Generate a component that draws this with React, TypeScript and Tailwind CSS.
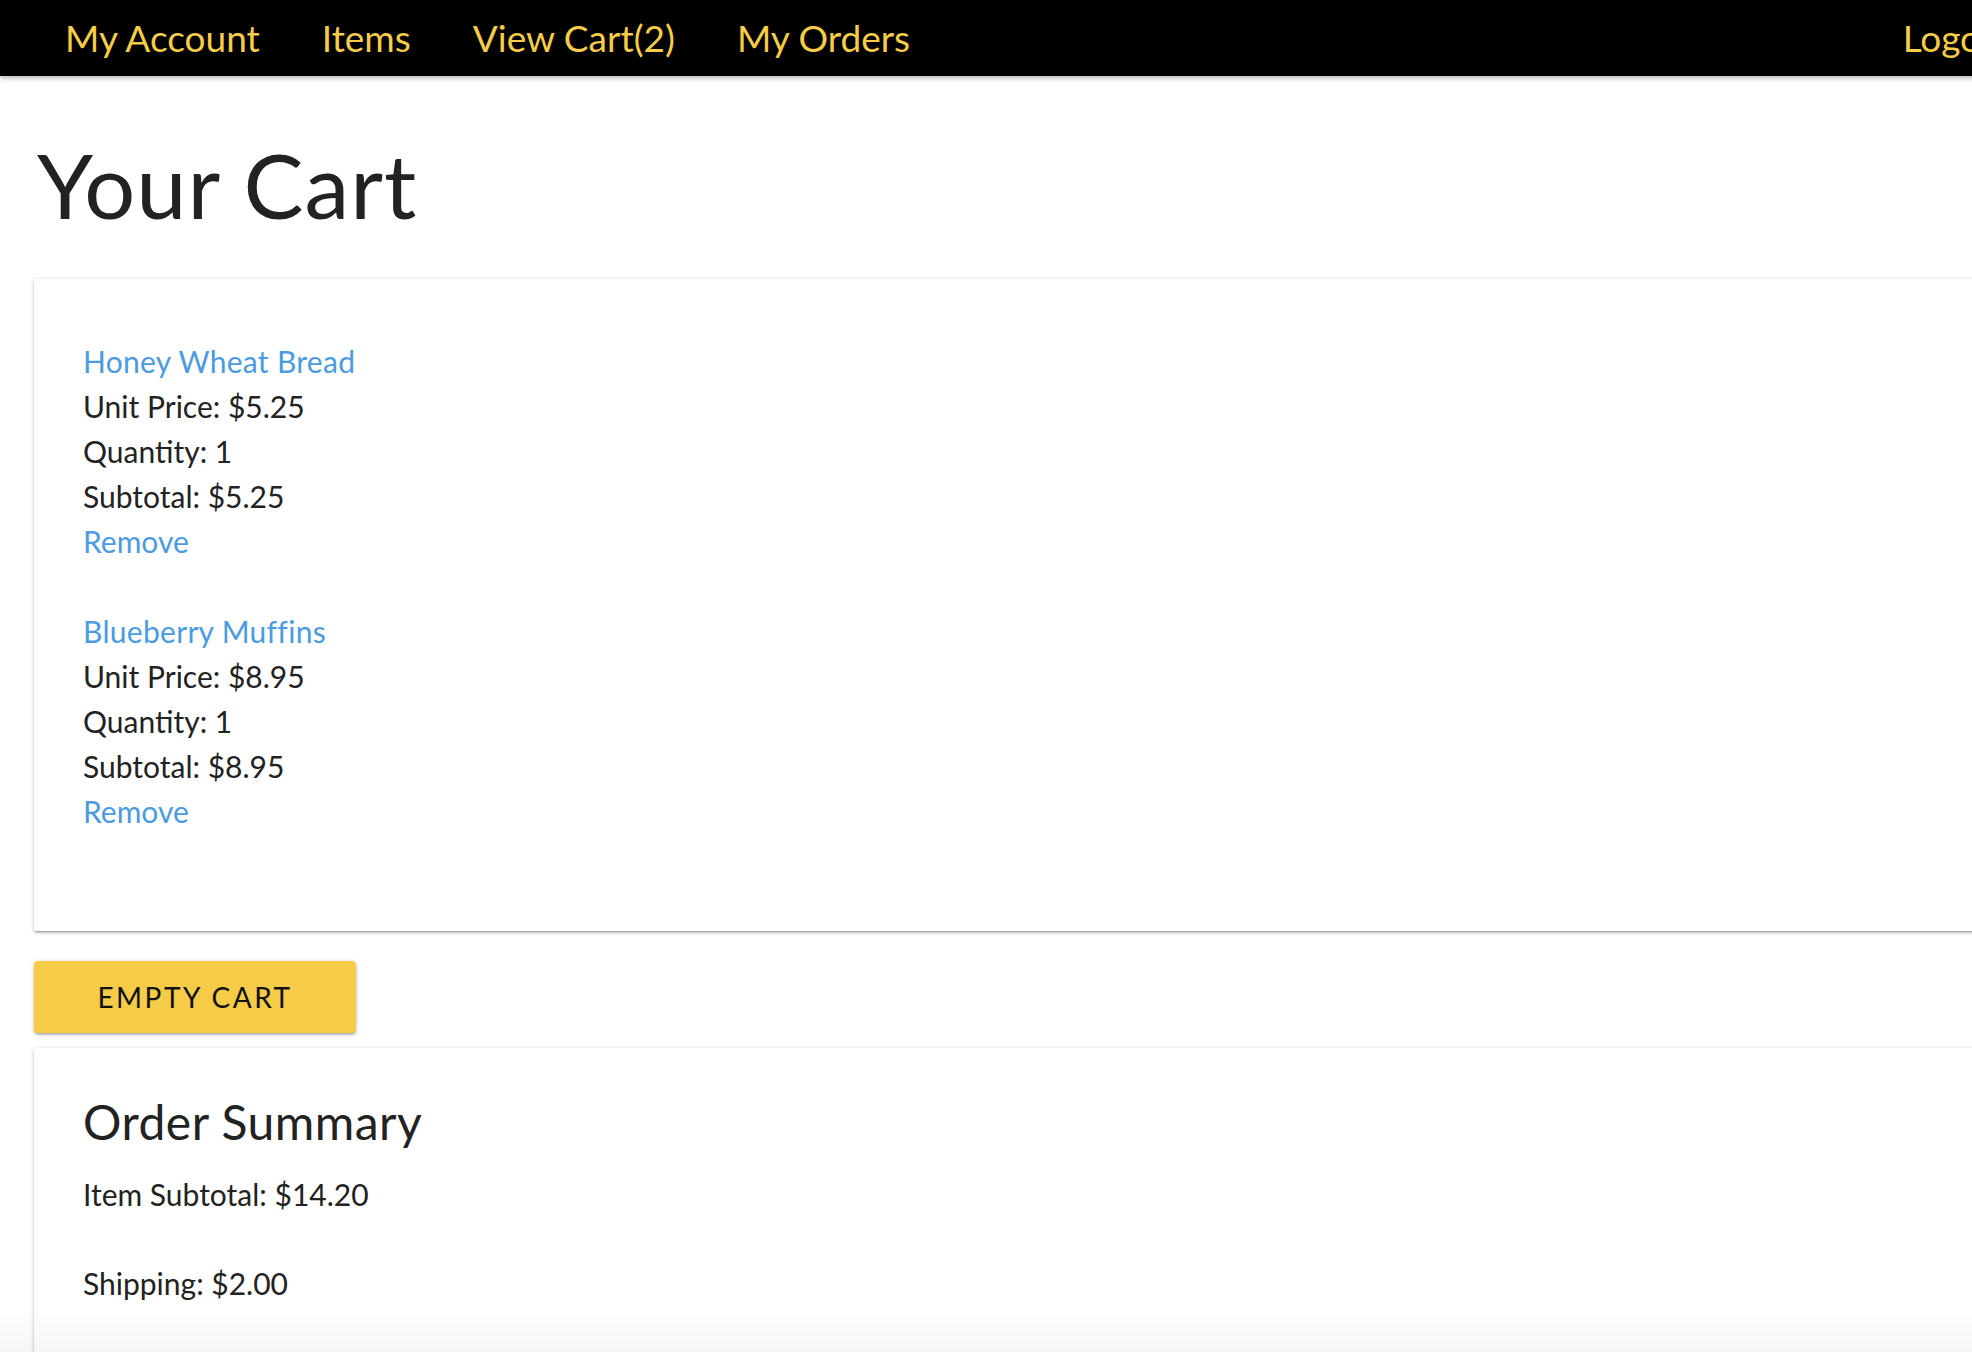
import React from 'react';

const items = [
  { name: 'Honey Wheat Bread', price: '$5.25', qty: 1, subtotal: '$5.25' },
  { name: 'Blueberry Muffins', price: '$8.95', qty: 1, subtotal: '$8.95' },
];

const navLinks = ['My Account', 'Items', 'View Cart(2)', 'My Orders'];

export default function App() {
  return (
    <div className="w-full min-h-screen overflow-hidden bg-white text-[#222] font-['Lato',sans-serif]">
      <div className="w-[2080px]">
        <nav className="h-[76px] bg-black flex items-center justify-between px-[34px] shadow-[0_2px_5px_rgba(0,0,0,0.3)] relative">
          <div className="flex">
            {navLinks.map((l) => (
              <a key={l} className="px-[31px] text-[37px] leading-[74px] text-[#F7CC47]">
                {l}
              </a>
            ))}
          </div>
          <a className="px-[31px] text-[37px] leading-[74px] text-[#F7CC47]">Logout</a>
        </nav>

        <main className="px-[34px] pb-[40px]">
          <h1 className="mt-[54px] ml-[3px] text-[90px] leading-[108px] font-normal tracking-[1px]">Your Cart</h1>

          <section className="mt-[41px] bg-white rounded-[2px] pt-[60px] pb-[97px] px-[49px] shadow-[0_2px_2px_0_rgba(0,0,0,0.14),0_3px_1px_-2px_rgba(0,0,0,0.12),0_1px_5px_0_rgba(0,0,0,0.2)]">
            <div className="flex flex-col gap-[45px] text-[30px] leading-[45px]">
              {items.map((it) => (
                <div key={it.name}>
                  <a className="block text-[#4A9BE0] tracking-[0.3px]">{it.name}</a>
                  <p>Unit Price: {it.price}</p>
                  <p>Quantity: {it.qty}</p>
                  <p>Subtotal: {it.subtotal}</p>
                  <a className="block text-[#4A9BE0]">Remove</a>
                </div>
              ))}
            </div>
          </section>

          <button className="mt-[30px] w-[322px] h-[72px] bg-[#F6CB47] rounded-[4px] text-[28px] tracking-[2.5px] uppercase text-[#111] shadow-[0_2px_2px_0_rgba(0,0,0,0.14),0_3px_1px_-2px_rgba(0,0,0,0.12),0_1px_5px_0_rgba(0,0,0,0.2)]">
            Empty Cart
          </button>

          <section className="mt-[15px] bg-white rounded-[2px] pt-[45px] pb-[60px] px-[49px] shadow-[0_2px_2px_0_rgba(0,0,0,0.14),0_3px_1px_-2px_rgba(0,0,0,0.12),0_1px_5px_0_rgba(0,0,0,0.2)]">
            <h2 className="text-[48px] leading-[58px] tracking-[0.5px]">Order Summary</h2>
            <p className="mt-[21px] text-[30px] leading-[45px]">Item Subtotal: $14.20</p>
            <p className="mt-[44px] text-[30px] leading-[45px]">Shipping: $2.00</p>
          </section>
        </main>
      </div>
      <div className="pointer-events-none fixed bottom-0 left-0 w-full h-[45px] bg-gradient-to-b from-transparent to-black/[0.035]" />
    </div>
  );
}
